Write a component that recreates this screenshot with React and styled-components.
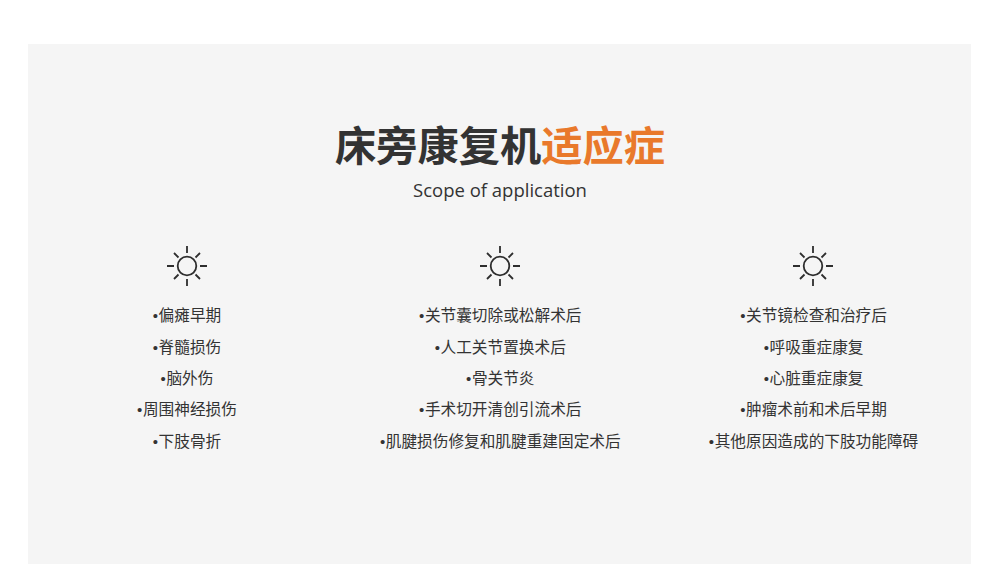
import styled, { createGlobalStyle } from "styled-components";

const GlobalStyle = createGlobalStyle`
  html, body {
    margin: 0;
    padding: 0;
    background: #fff;
  }
  body {
    font-family: "Open Sans", "Noto Sans CJK SC", sans-serif;
  }
`;

const Page = styled.div`
  width: 1000px;
  height: 583px;
  padding: 44px 29px 19px 28px;
  box-sizing: border-box;
  overflow: hidden;
`;

const Panel = styled.section`
  height: 100%;
  background: #f5f5f5;
  padding-top: 74px;
  box-sizing: border-box;
`;

const Title = styled.h2`
  margin: 0;
  padding-left: 1px;
  font-size: 41.25px;
  line-height: 54px;
  font-weight: 700;
  color: #333;
  text-align: center;
`;

const Accent = styled.span`
  color: #e9792b;
`;

const Subtitle = styled.p`
  margin: 6px 0 0;
  padding-left: 1px;
  font-size: 18.5px;
  line-height: 24px;
  color: #333;
  text-align: center;
`;

const Columns = styled.div`
  display: grid;
  grid-template-columns: repeat(3, 313.3px);
  margin-top: 42.5px;
  padding-left: 2px;
`;

const Column = styled.div`
  display: flex;
  flex-direction: column;
  align-items: center;
`;

const SunIcon = styled.svg`
  width: 42px;
  height: 42px;
  margin-bottom: 13.7px;
  stroke: #2e2e2e;
  stroke-width: 1.8;
  fill: none;
`;

const List = styled.ul`
  margin: 0;
  padding: 0;
  list-style: none;
`;

const Item = styled.li`
  height: 31.4px;
  font-size: 15.67px;
  line-height: 31.4px;
  color: #333;
  text-align: center;
  white-space: nowrap;
`;

const Bullet = styled.span`
  display: inline-block;
  width: 6.5px;
  font-family: "Liberation Sans", sans-serif;
  font-size: 15px;
  line-height: 0;
  text-align: center;
`;

const Sun = () => (
  <SunIcon viewBox="0 0 42 42">
    <circle cx="21" cy="21" r="9.3" />
    <path d="M21 1v7M21 34v7M1 21h7M34 21h7M8 8l4.5 4.5M29.500 29.500l4.500 4.500M8 34l4.500-4.500M29.500 12.500l4.500-4.500" />
  </SunIcon>
);

const columns = [
  ["偏瘫早期", "脊髓损伤", "脑外伤", "周围神经损伤", "下肢骨折"],
  ["关节囊切除或松解术后", "人工关节置换术后", "骨关节炎", "手术切开清创引流术后", "肌腱损伤修复和肌腱重建固定术后"],
  ["关节镜检查和治疗后", "呼吸重症康复", "心脏重症康复", "肿瘤术前和术后早期", "其他原因造成的下肢功能障碍"],
];

const App = () => (
  <Page>
    <GlobalStyle />
    <Panel>
      <Title>
        床旁康复机<Accent>适应症</Accent>
      </Title>
      <Subtitle>Scope of application</Subtitle>
      <Columns>
        {columns.map((items) => (
          <Column key={items[0]}>
            <Sun />
            <List>
              {items.map((item) => (
                <Item key={item}>
                  <Bullet>•</Bullet>
                  {item}
                </Item>
              ))}
            </List>
          </Column>
        ))}
      </Columns>
    </Panel>
  </Page>
);

export default App;
